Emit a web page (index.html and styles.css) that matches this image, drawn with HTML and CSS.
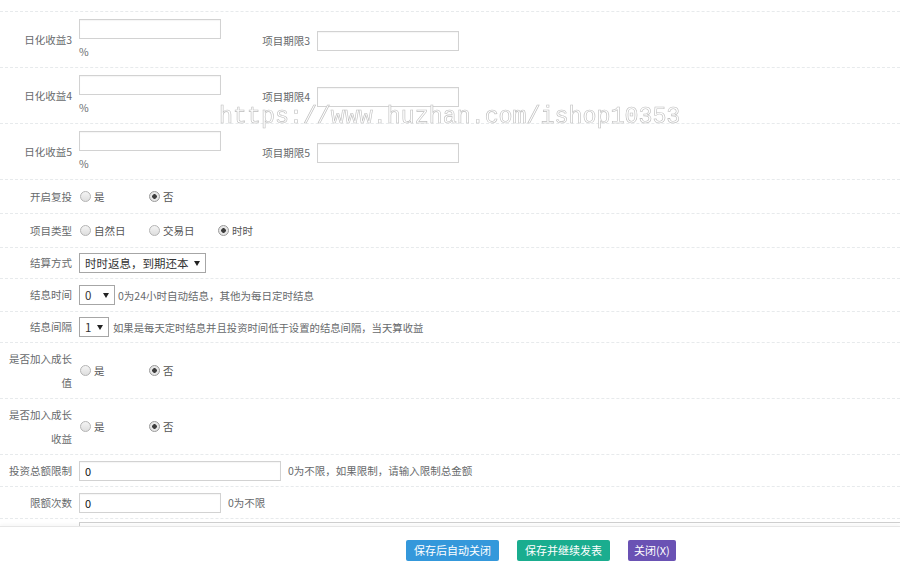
FILE: index.html
```html
<!DOCTYPE html>
<html lang="zh-CN">
<head>
<meta charset="utf-8">
<title>项目设置</title>
<link rel="stylesheet" href="styles.css">
</head>
<body>
<div class="page">
  <div class="form">
    <div class="form-top"></div>

    <div class="row row-tall">
      <div class="group">
        <label class="lbl">日化收益3</label>
        <div class="stack"><input class="inp" type="text"><span class="unit">%</span></div>
      </div>
      <div class="group group-right">
        <label class="lbl">项目期限3</label>
        <input class="inp" type="text">
      </div>
    </div>

    <div class="row row-tall">
      <div class="group">
        <label class="lbl">日化收益4</label>
        <div class="stack"><input class="inp" type="text"><span class="unit">%</span></div>
      </div>
      <div class="group group-right">
        <label class="lbl">项目期限4</label>
        <input class="inp" type="text">
      </div>
    </div>

    <div class="row row-tall">
      <div class="group">
        <label class="lbl">日化收益5</label>
        <div class="stack"><input class="inp" type="text"><span class="unit">%</span></div>
      </div>
      <div class="group group-right">
        <label class="lbl">项目期限5</label>
        <input class="inp" type="text">
      </div>
    </div>

    <div class="row row-radio">
      <label class="lbl">开启复投</label>
      <label class="opt"><input class="radio" type="radio" name="fu"><span>是</span></label>
      <label class="opt"><input class="radio" type="radio" name="fu" checked><span>否</span></label>
    </div>

    <div class="row row-radio">
      <label class="lbl">项目类型</label>
      <label class="opt"><input class="radio" type="radio" name="lx"><span>自然日</span></label>
      <label class="opt"><input class="radio" type="radio" name="lx"><span>交易日</span></label>
      <label class="opt"><input class="radio" type="radio" name="lx" checked><span>时时</span></label>
    </div>

    <div class="row row-select">
      <label class="lbl">结算方式</label>
      <span class="sel"><select class="select select-settle"><option>时时返息，到期还本</option></select></span>
    </div>

    <div class="row row-select row-select-mid">
      <label class="lbl">结息时间</label>
      <span class="sel"><select class="select select-hour"><option>0</option></select></span>
      <span class="hint">0为24小时自动结息，其他为每日定时结息</span>
    </div>

    <div class="row row-select">
      <label class="lbl">结息间隔</label>
      <span class="sel"><select class="select select-interval"><option>1</option></select></span>
      <span class="hint hint-wide">如果是每天定时结息并且投资时间低于设置的结息间隔，当天算收益</span>
    </div>

    <div class="row row-tall">
      <label class="lbl">是否加入成长值</label>
      <label class="opt"><input class="radio" type="radio" name="cz"><span>是</span></label>
      <label class="opt"><input class="radio" type="radio" name="cz" checked><span>否</span></label>
    </div>

    <div class="row row-tall">
      <label class="lbl">是否加入成长收益</label>
      <label class="opt"><input class="radio" type="radio" name="sy"><span>是</span></label>
      <label class="opt"><input class="radio" type="radio" name="sy" checked><span>否</span></label>
    </div>

    <div class="row row-input">
      <label class="lbl">投资总额限制</label>
      <input class="inp inp-wide" type="text" value="0">
      <span class="hint hint-input">0为不限，如果限制，请输入限制总金额</span>
    </div>

    <div class="row row-input">
      <label class="lbl">限额次数</label>
      <input class="inp" type="text" value="0">
      <span class="hint hint-input">0为不限</span>
    </div>

    <div class="row row-last">
      <label class="lbl"></label>
      <textarea class="area"></textarea>
    </div>
  </div>

  <div class="footer">
    <button class="btn btn-blue" type="button">保存后自动关闭</button>
    <button class="btn btn-green" type="button">保存并继续发表</button>
    <button class="btn btn-purple" type="button">关闭(X)</button>
  </div>

  <div class="watermark">https://www.huzhan.com/ishop10353</div>
</div>
</body>
</html>
```

FILE: styles.css
```css
html, body {
  margin: 0;
  padding: 0;
  background: #fff;
}

body {
  font-family: "Noto Sans CJK SC", "Noto Sans", sans-serif;
  font-size: 10.5px;
  color: #676a6c;
}

.page {
  position: relative;
  width: 900px;
  height: 568px;
  display: flex;
  flex-direction: column;
  overflow: hidden;
}

.form {
  flex: 1;
  overflow: hidden;
  min-height: 0;
}

.form-top {
  height: 11px;
  border-bottom: 1px dashed #e7eaec;
}

.row {
  display: flex;
  align-items: center;
  box-sizing: border-box;
  border-bottom: 1px dashed #e7eaec;
  width: 900px;
}

.row-tall { height: 56px; }
.row-radio { height: 34px; }
.row-select { height: 31px; }
.row-select-mid { height: 33px; }
.row-input { height: 32px; }
.row-last {
  align-items: flex-start;
  padding-top: 3px;
  height: 60px;
  border-bottom: none;
}

.group {
  display: flex;
  align-items: center;
  width: 238px;
  flex: none;
}

.group-right {
  padding-top: 3px;
}

.lbl {
  flex: none;
  width: 79px;
  box-sizing: border-box;
  padding-right: 7px;
  text-align: right;
  line-height: 24px;
  color: #676a6c;
}

.stack {
  display: flex;
  flex-direction: column;
  padding-top: 5px;
}

.unit {
  line-height: 26px;
  color: #676a6c;
}

.inp {
  box-sizing: border-box;
  width: 142px;
  height: 20px;
  margin: 0;
  padding: 0 5px;
  border: 1px solid #d2d2d2;
  border-radius: 0;
  box-shadow: inset 0 1px 1px rgba(0, 0, 0, 0.04);
  background: #fff;
  font-family: "Noto Sans CJK SC", "Noto Sans", sans-serif;
  font-size: 11px;
  color: #111;
  outline: none;
}

.inp-wide {
  width: 202px;
}

.area {
  box-sizing: border-box;
  width: 840px;
  height: 50px;
  margin: 0;
  border: 1px solid #cfcfcf;
  resize: none;
  flex: none;
}

.opt {
  display: inline-flex;
  align-items: center;
  width: 69px;
  flex: none;
  color: #555;
  line-height: 17px;
}

.radio {
  appearance: none;
  -webkit-appearance: none;
  box-sizing: border-box;
  width: 11px;
  height: 11px;
  margin: 0 3px 0 1px;
  border: 1px solid #b4b4b4;
  border-radius: 50%;
  background: linear-gradient(#f4f4f4, #dedede);
  flex: none;
}

.radio:checked {
  background: radial-gradient(circle, #3d3d3d 0, #3d3d3d 2px, #e6e6e6 2.6px, #e6e6e6 100%);
  border-color: #9a9a9a;
}

.sel {
  position: relative;
  display: inline-block;
  flex: none;
  height: 20px;
}

.sel::after {
  content: "";
  position: absolute;
  right: 6px;
  top: 8px;
  border-left: 3px solid transparent;
  border-right: 3px solid transparent;
  border-top: 5px solid #222;
  pointer-events: none;
}

.select {
  appearance: none;
  -webkit-appearance: none;
  box-sizing: border-box;
  height: 20px;
  margin: 0;
  padding: 0 0 0 5px;
  border: 1px solid #a6a6a6;
  border-radius: 0;
  background: #fff;
  font-family: "Noto Sans CJK SC", "Noto Sans", sans-serif;
  font-size: 11.5px;
  color: #333;
  line-height: 18px;
  display: block;
}

.select-settle { width: 127px; }
.select-hour { width: 36px; }
.select-interval { width: 30px; }

.hint {
  margin-left: 3px;
  color: #676a6c;
  white-space: nowrap;
}

.hint-wide {
  margin-left: 4px;
  font-size: 10.35px;
}

.hint-input {
  margin-left: 7px;
}

.footer {
  flex: none;
  height: 42px;
  box-sizing: border-box;
  border-top: 1px solid #e6e6e6;
  box-shadow: 0 -2px 3px rgba(0, 0, 0, 0.03);
  background: #fff;
  display: flex;
  align-items: flex-start;
  gap: 18px;
  padding: 13px 0 0 406px;
}

.btn {
  height: 21px;
  margin: 0;
  padding: 0 8px;
  border: none;
  border-radius: 2px;
  font-family: "Noto Sans CJK SC", "Noto Sans", sans-serif;
  font-size: 11px;
  line-height: 21px;
  color: #fff;
  cursor: pointer;
}

.btn-blue { background: #3498db; }
.btn-green { background: #1aad8f; }
.btn-purple { background: #6a52b4; padding: 0 6px; }

.watermark {
  position: absolute;
  left: 219px;
  top: 105px;
  font-family: "Liberation Mono", "DejaVu Sans Mono", monospace;
  font-size: 23.3px;
  line-height: 24px;
  white-space: nowrap;
  color: #fff;
  -webkit-text-stroke: 0.6px #bdbdbd;
  opacity: 0.99;
  will-change: transform;
  pointer-events: none;
}
```
